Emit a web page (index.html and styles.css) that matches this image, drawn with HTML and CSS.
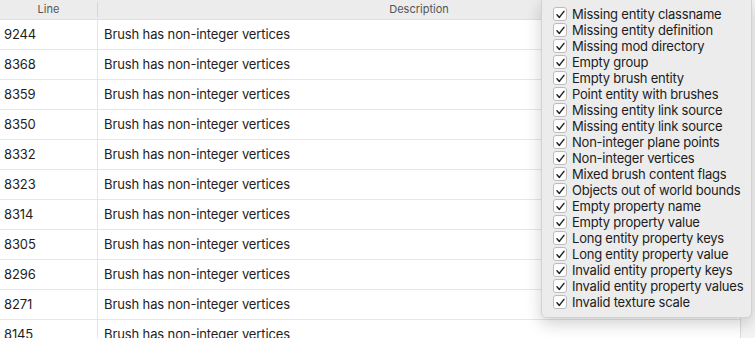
FILE: index.html
```html
<!DOCTYPE html>
<html lang="en">
<head>
  <meta charset="UTF-8" />
  <title>Issues</title>
  <link rel="stylesheet" href="styles.css">
</head>
<body>

  <div class="window">
    <div class="table">
      <div class="head">
        <div class="col-line">Line</div>
        <div class="col-desc">Description</div>
      </div>
      <div id="rows"></div>
    </div>
    <div class="side"></div>

    <div class="popup" id="filters"></div>
  </div>

  <script>
    const lines = [9244, 8368, 8359, 8350, 8332, 8323, 8314, 8305, 8296, 8271, 8145];
    const filters = [
      "Missing entity classname", "Missing entity definition", "Missing mod directory",
      "Empty group", "Empty brush entity", "Point entity with brushes",
      "Missing entity link source", "Missing entity link source", "Non-integer plane points",
      "Non-integer vertices", "Mixed brush content flags", "Objects out of world bounds",
      "Empty property name", "Empty property value", "Long entity property keys",
      "Long entity property value", "Invalid entity property keys", "Invalid entity property values",
      "Invalid texture scale"
    ];

    const rows = document.getElementById("rows");
    lines.forEach(n => {
      const row = document.createElement("div");
      row.className = "row";
      row.innerHTML = `<div class="col-line">${n}</div><div class="col-desc">Brush has non-integer vertices</div>`;
      rows.appendChild(row);
    });

    const check = '<svg width="11" height="11" viewBox="0 0 11 11"><path d="M2 5.8 L4.3 8.4 L9 2.4" fill="none" stroke="#222" stroke-width="1.5" stroke-linecap="round" stroke-linejoin="round"/></svg>';
    const popup = document.getElementById("filters");
    filters.forEach(f => {
      const item = document.createElement("div");
      item.className = "item";
      item.innerHTML = `<span class="box">${check}</span><span>${f}</span>`;
      popup.appendChild(item);
    });
  </script>

</body>
</html>
```

FILE: styles.css
```css
body {
  margin: 0;
  font-family: Inter, "Liberation Sans", Arial, sans-serif;
  font-size: 13px;
  color: #1e1e1e;
  background: #f6f6f6;
  overflow: hidden;
}
.window {
  position: relative;
  display: flex;
  height: 338px;
}
.table {
  width: 740px;
  background: #fff;
  border-right: 1px solid #dcdcdc;
}
.side {
  flex: 1;
  background: #f4f4f4;
}
.head {
  display: flex;
  height: 20px;
  background: #ececec;
  border-bottom: 1px solid #e0e0e0;
  box-sizing: border-box;
  color: #555;
  font-size: 11px;
  line-height: 19px;
}
.head .col-line,
.head .col-desc {
  text-align: center;
  padding: 0;
}
.head .col-line {
  border-right: 1px solid #d6d6d6;
  margin: 2px 0;
  line-height: 15px;
}
.row {
  display: flex;
  height: 30px;
  line-height: 29px;
  letter-spacing: -0.12px;
  border-bottom: 1px solid #e6e6e6;
  box-sizing: border-box;
}
.col-line {
  width: 98px;
  padding-left: 4px;
  box-sizing: border-box;
  border-right: 1px solid #e6e6e6;
}
.col-desc {
  flex: 1;
  padding-left: 6px;
}
.popup {
  position: absolute;
  left: 541px;
  top: -1px;
  width: 211px;
  height: 319px;
  box-sizing: border-box;
  padding: 6px 0 0 11px;
  background: #ececec;
  border: 1px solid #d2d2d2;
  border-radius: 0 0 5px 5px;
  box-shadow: 0 6px 16px rgba(0, 0, 0, 0.18);
}
.item {
  display: flex;
  align-items: center;
  gap: 5px;
  height: 16px;
  white-space: nowrap;
  font-size: 13px;
  letter-spacing: -0.22px;
  color: #1c1c1c;
}
.box {
  display: flex;
  align-items: center;
  justify-content: center;
  width: 12px;
  height: 12px;
  background: #fff;
  border: 1px solid #bcbcbc;
  border-radius: 3px;
}
```
